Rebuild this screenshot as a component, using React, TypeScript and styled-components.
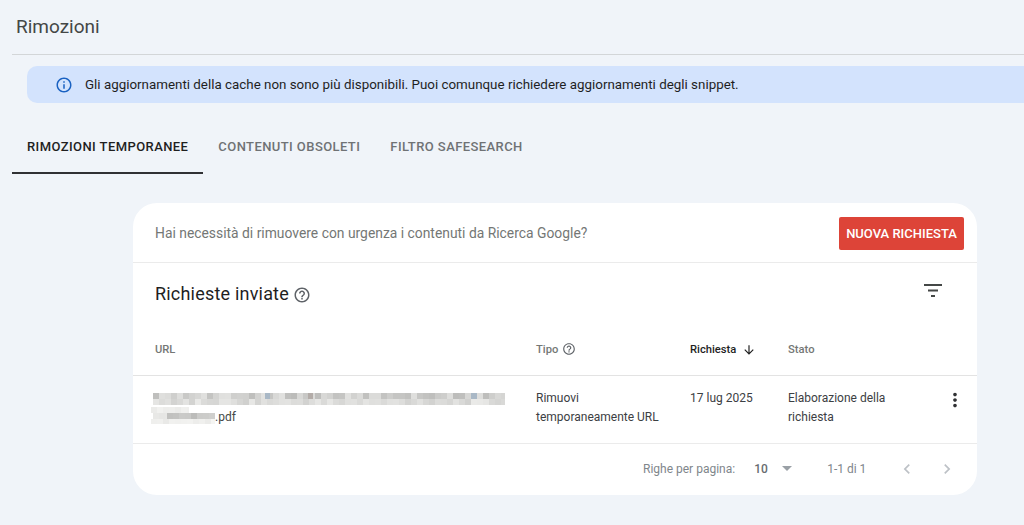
import React from "react";
import styled, { createGlobalStyle } from "styled-components";

const Global = createGlobalStyle`
  html, body { margin: 0; padding: 0; background: #f0f4f9; overflow: hidden; }
  body { font-family: Roboto, "Liberation Sans", sans-serif; color: #1f1f1f; }
  * { box-sizing: border-box; }
`;

const Page = styled.div`
  width: 1024px;
  height: 525px;
  overflow: hidden;
  background: #f0f4f9;
  padding-left: 12px;
`;

const Header = styled.header`
  height: 55px;
  border-bottom: 1px solid #d3d6d8;
  padding: 15px 0 0 4px;
`;

const Title = styled.h1`
  margin: 0;
  font-size: 19px;
  line-height: 24px;
  font-weight: 400;
  color: #444746;
`;

const Banner = styled.div`
  margin: 11px 0 0 15px;
  width: 1010px;
  height: 37px;
  border-radius: 10px 0 0 10px;
  background: #d3e3fd;
  display: flex;
  align-items: center;
  padding-left: 28px;
  gap: 12px;
  font-size: 13.36px;
  color: #1f1f1f;
  white-space: nowrap;
`;

const Tabs = styled.nav`
  display: flex;
  margin-top: 21px;
`;

const Tab = styled.div<{ $active?: boolean }>`
  height: 50px;
  padding: 15px 15px 0;
  font-size: 13px;
  line-height: 16px;
  font-weight: 500;
  letter-spacing: 0.42px;
  white-space: nowrap;
  color: ${(p) => (p.$active ? "#1f1f1f" : "#6f7275")};
  border-bottom: 2px solid ${(p) => (p.$active ? "#303134" : "transparent")};
`;

const Card = styled.section`
  margin: 29px 0 0 121px;
  width: 844px;
  height: 292px;
  background: #fff;
  border-radius: 24px;
  overflow: hidden;
`;

const Prompt = styled.div`
  height: 60px;
  border-bottom: 1px solid #ebebeb;
  display: flex;
  align-items: center;
  justify-content: space-between;
  padding: 0 13px 0 22px;
`;

const PromptText = styled.span`
  font-size: 13.87px;
  color: #747775;
`;

const PrimaryButton = styled.button`
  width: 125px;
  height: 33px;
  margin-top: 2px;
  border: 0;
  border-radius: 2px;
  background: #dd4438;
  color: #fff;
  font: 500 13px Roboto, sans-serif;
  white-space: nowrap;
  padding: 0;
`;

const SectionHead = styled.div`
  height: 64px;
  display: flex;
  align-items: center;
  padding: 0 32px 0 22px;
`;

const SectionTitle = styled.h2`
  margin: -3px 0 0;
  font-size: 18px;
  font-weight: 400;
  color: #1f1f1f;
  line-height: 24px;
  letter-spacing: 0.2px;
`;

const HelpWrap = styled.span<{ $size: number }>`
  display: flex;
  width: ${(p) => p.$size}px;
  height: ${(p) => p.$size}px;
  color: #5f6368;
`;

const TitleHelp = styled(HelpWrap)`
  margin-left: 4px;
  margin-top: -1px;
`;

const TipoHelp = styled(HelpWrap)`
  margin-top: -2px;
`;

const FilterButton = styled.span`
  display: flex;
  margin-left: auto;
  margin-top: -10px;
  color: #444746;
`;

const Grid = styled.div`
  display: grid;
  grid-template-columns: 381px 154px 98px 1fr;
  padding-left: 22px;
`;

const ColHead = styled(Grid)`
  height: 49px;
  border-bottom: 1px solid #e3e3e3;
  align-items: center;
`;

const HeadCell = styled.div<{ $active?: boolean }>`
  display: flex;
  align-items: center;
  gap: ${(p) => (p.$active ? 6 : 4)}px;
  font-size: 11.2px;
  font-weight: 500;
  color: ${(p) => (p.$active ? "#1f1f1f" : "#747775")};
  margin-top: -3px;
`;

const Row = styled(Grid)`
  position: relative;
  height: 68px;
  border-bottom: 1px solid #ebebeb;
  padding-top: 13px;
  font-size: 12px;
  line-height: 19px;
  color: #3c4043;
`;

const UrlCell = styled.div`
  position: relative;
`;

const BlurArt = styled.svg`
  position: absolute;
  left: -4px;
  top: 4px;
  filter: blur(0.5px);
`;

const PdfLine = styled.div`
  padding: 19px 0 0 60px;
  color: #444746;
`;

const MoreButton = styled.span`
  position: absolute;
  left: 811px;
  top: 13px;
  display: flex;
  color: #303134;
`;

const Pagination = styled.div`
  height: 51px;
  display: flex;
  align-items: center;
  font-size: 12px;
  color: #80868b;
  padding: 0 0 2px 510px;
`;

const RowsValue = styled.span`
  margin-left: 19px;
  width: 28px;
  color: #686c70;
  font-weight: 500;
`;

const Caret = styled.svg`
  flex: none;
`;

const Range = styled.span`
  margin-left: 35px;
  width: 39px;
  white-space: nowrap;
`;

const Chevron = styled.svg<{ $gap: number }>`
  margin-left: ${(p) => p.$gap}px;
  color: #bdc1c6;
`;

// A pseudo-random grey in [lo, hi], stable from one render to the next.
function grey(i: number, lo: number, hi: number) {
  const h = Math.abs(Math.sin(i * 12.9898) * 43758.5453) % 1;
  const v = Math.round(lo + h * (hi - lo));
  return `rgb(${v},${v},${v - 2})`;
}

function Mosaic() {
  const cells: React.ReactNode[] = [];
  const band = (x0: number, x1: number, y: number, h: number, key: number, lo: number, hi: number) => {
    let i = 0;
    for (let x = x0; x < x1; x += 6) {
      cells.push(
        <rect key={`${key}-${i}`} x={x} y={y} width={Math.min(6, x1 - x)} height={h} fill={grey(key * 100 + i + 1, lo, hi)} />
      );
      i += 1;
    }
  };
  band(2, 354, 0, 6, 1, 188, 226);
  band(2, 354, 6, 6, 2, 208, 234);
  band(0, 38, 14, 6, 3, 232, 242);
  band(2, 16, 20, 6, 4, 222, 236);
  band(16, 64, 20, 6, 5, 182, 208);
  band(0, 64, 26, 5, 6, 232, 246);
  cells.push(<rect key="s1" x="114" y="0" width="5" height="6" fill="#a9b8c6" />);
  cells.push(<rect key="s2" x="157" y="0" width="5" height="6" fill="#b3aca8" />);
  cells.push(<rect key="s3" x="320" y="0" width="6" height="6" fill="#a9b8c6" />);
  return (
    <BlurArt width="356" height="32" viewBox="0 0 356 32" aria-hidden>
      {cells}
    </BlurArt>
  );
}

const HelpIcon = ({ size }: { size: number }) => (
  <svg width={size} height={size} viewBox="0 0 24 24" fill="currentColor" aria-hidden>
    <path d="M11 18h2v-2h-2v2zm1-16C6.48 2 2 6.48 2 12s4.48 10 10 10 10-4.48 10-10S17.52 2 12 2zm0 18c-4.41 0-8-3.59-8-8s3.59-8 8-8 8 3.59 8 8-3.59 8-8 8zm0-14c-2.21 0-4 1.79-4 4h2c0-1.1.9-2 2-2s2 .9 2 2c0 2-3 1.75-3 5h2c0-2.25 3-2.5 3-5 0-2.21-1.79-4-4-4z" />
  </svg>
);

export default function App() {
  return (
    <Page>
      <Global />
      <Header>
        <Title>Rimozioni</Title>
      </Header>
      <Banner>
        <svg width="18" height="18" viewBox="0 0 24 24" fill="#1a62c2" aria-hidden>
          <path d="M11 7h2v2h-2V7zm0 4h2v6h-2v-6zm1-9C6.48 2 2 6.48 2 12s4.48 10 10 10 10-4.48 10-10S17.52 2 12 2zm0 18c-4.41 0-8-3.59-8-8s3.59-8 8-8 8 3.59 8 8-3.59 8-8 8z" />
        </svg>
        <span>Gli aggiornamenti della cache non sono più disponibili. Puoi comunque richiedere aggiornamenti degli snippet.</span>
      </Banner>
      <Tabs>
        <Tab $active>RIMOZIONI TEMPORANEE</Tab>
        <Tab>CONTENUTI OBSOLETI</Tab>
        <Tab>FILTRO SAFESEARCH</Tab>
      </Tabs>
      <Card>
        <Prompt>
          <PromptText>Hai necessità di rimuovere con urgenza i contenuti da Ricerca Google?</PromptText>
          <PrimaryButton>NUOVA RICHIESTA</PrimaryButton>
        </Prompt>
        <SectionHead>
          <SectionTitle>Richieste inviate</SectionTitle>
          <TitleHelp $size={18}>
            <HelpIcon size={18} />
          </TitleHelp>
          <FilterButton>
            <svg width="24" height="24" viewBox="0 0 24 24" fill="currentColor" aria-hidden>
              <path d="M3 6h18v2H3V6zm4 5.500h10v2H7v-2zm3 5.500h4v2h-4v-2z" />
            </svg>
          </FilterButton>
        </SectionHead>
        <ColHead>
          <HeadCell>URL</HeadCell>
          <HeadCell>
            Tipo
            <TipoHelp $size={14}>
              <HelpIcon size={14} />
            </TipoHelp>
          </HeadCell>
          <HeadCell $active>
            Richiesta
            <svg width="14" height="14" viewBox="0 0 24 24" fill="currentColor" aria-hidden>
              <path d="M20 12l-1.410-1.410L13 16.170V4h-2v12.170l-5.580-5.590L4 12l8 8 8-8z" />
            </svg>
          </HeadCell>
          <HeadCell>Stato</HeadCell>
        </ColHead>
        <Row>
          <UrlCell>
            <Mosaic />
            <PdfLine>.pdf</PdfLine>
          </UrlCell>
          <div>
            Rimuovi
            <br />
            temporaneamente URL
          </div>
          <div>17 lug 2025</div>
          <div>
            Elaborazione della
            <br />
            richiesta
          </div>
          <MoreButton>
            <svg width="22" height="22" viewBox="0 0 24 24" fill="currentColor" aria-hidden>
              <path d="M12 8c1.100 0 2-.9 2-2s-.9-2-2-2-2 .9-2 2 .9 2 2 2zm0 2c-1.100 0-2 .9-2 2s.9 2 2 2 2-.9 2-2-.9-2-2-2zm0 6c-1.100 0-2 .9-2 2s.9 2 2 2 2-.9 2-2-.9-2-2-2z" />
            </svg>
          </MoreButton>
        </Row>
        <Pagination>
          <span>Righe per pagina:</span>
          <RowsValue>10</RowsValue>
          <Caret width="10" height="5" viewBox="0 0 10 5" aria-hidden>
            <path d="M0 0h10L5 5z" fill="#9aa0a6" />
          </Caret>
          <Range>1-1 di 1</Range>
          <Chevron $gap={31} width="20" height="20" viewBox="0 0 24 24" fill="currentColor" aria-hidden>
            <path d="M15.410 7.410L14 6l-6 6 6 6 1.410-1.410L10.830 12z" />
          </Chevron>
          <Chevron $gap={20} width="20" height="20" viewBox="0 0 24 24" fill="currentColor" aria-hidden>
            <path d="M10 6L8.590 7.410 13.170 12l-4.580 4.590L10 18l6-6z" />
          </Chevron>
        </Pagination>
      </Card>
    </Page>
  );
}
